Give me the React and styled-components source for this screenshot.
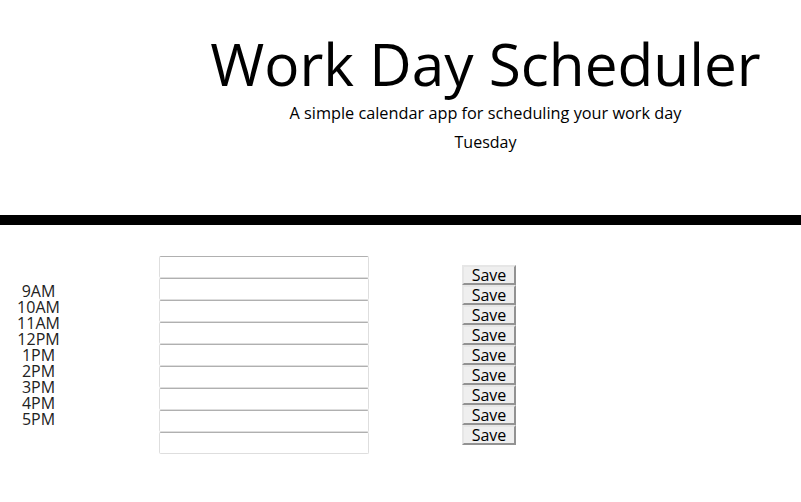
import React from 'react';
import styled, { createGlobalStyle } from 'styled-components';

const GlobalStyle = createGlobalStyle`
  body {
    margin: 0;
    background: #fff;
    font-family: 'Open Sans', sans-serif;
    color: #000;
  }
`;

const Header = styled.header`
  padding: 28px 0 0 170px;
  height: 225px;
  box-sizing: border-box;
  text-align: center;
  border-bottom: 10px solid #000;
`;

const Title = styled.h1`
  margin: 0;
  font-size: 58.5px;
  font-weight: 400;
  line-height: 1.2;
`;

const Lead = styled.p`
  margin: 6px 0 9px;
  font-size: 16.3px;
  line-height: 1.2;
`;

const Day = styled.p`
  margin: 0;
  font-size: 16px;
  line-height: 1.2;
`;

const Planner = styled.main`
  display: flex;
  align-items: center;
  padding-top: 31px;
`;

const HourColumn = styled.div`
  width: 77px;
  text-align: center;
  font-size: 16px;
  line-height: 16px;
  color: #222;
`;

const Hour = styled.div``;

const NoteColumn = styled.div`
  display: flex;
  flex-direction: column;
  margin-left: 82px;
  width: 210px;
`;

const Note = styled.textarea`
  width: 210px;
  height: 22px;
  box-sizing: border-box;
  margin: 0;
  padding: 2px;
  border: 1px solid #dedede;
  border-top-color: #b0b0b0;
  border-radius: 2px;
  resize: none;
  font-family: 'Open Sans', sans-serif;
  font-size: 13px;
`;

const SaveColumn = styled.div`
  display: flex;
  flex-direction: column;
  margin-left: 93px;
`;

const SaveButton = styled.button`
  width: 54px;
  height: 20px;
  box-sizing: border-box;
  margin: 0;
  padding: 0;
  border: 2px outset #e6e6e6;
  background: #efefef;
  font-family: 'Open Sans', sans-serif;
  font-size: 16px;
  line-height: 16px;
  color: #000;
`;

const hours = ['9AM', '10AM', '11AM', '12PM', '1PM', '2PM', '3PM', '4PM', '5PM'];

export default function App() {
  return (
    <>
      <GlobalStyle />
      <Header>
        <Title>Work Day Scheduler</Title>
        <Lead>A simple calendar app for scheduling your work day</Lead>
        <Day>Tuesday</Day>
      </Header>
      <Planner>
        <HourColumn>
          {hours.map(h => <Hour key={h}>{h}</Hour>)}
        </HourColumn>
        <NoteColumn>
          {hours.map(h => <Note key={h} />)}
        </NoteColumn>
        <SaveColumn>
          {hours.map(h => <SaveButton key={h}>Save</SaveButton>)}
        </SaveColumn>
      </Planner>
    </>
  );
}
